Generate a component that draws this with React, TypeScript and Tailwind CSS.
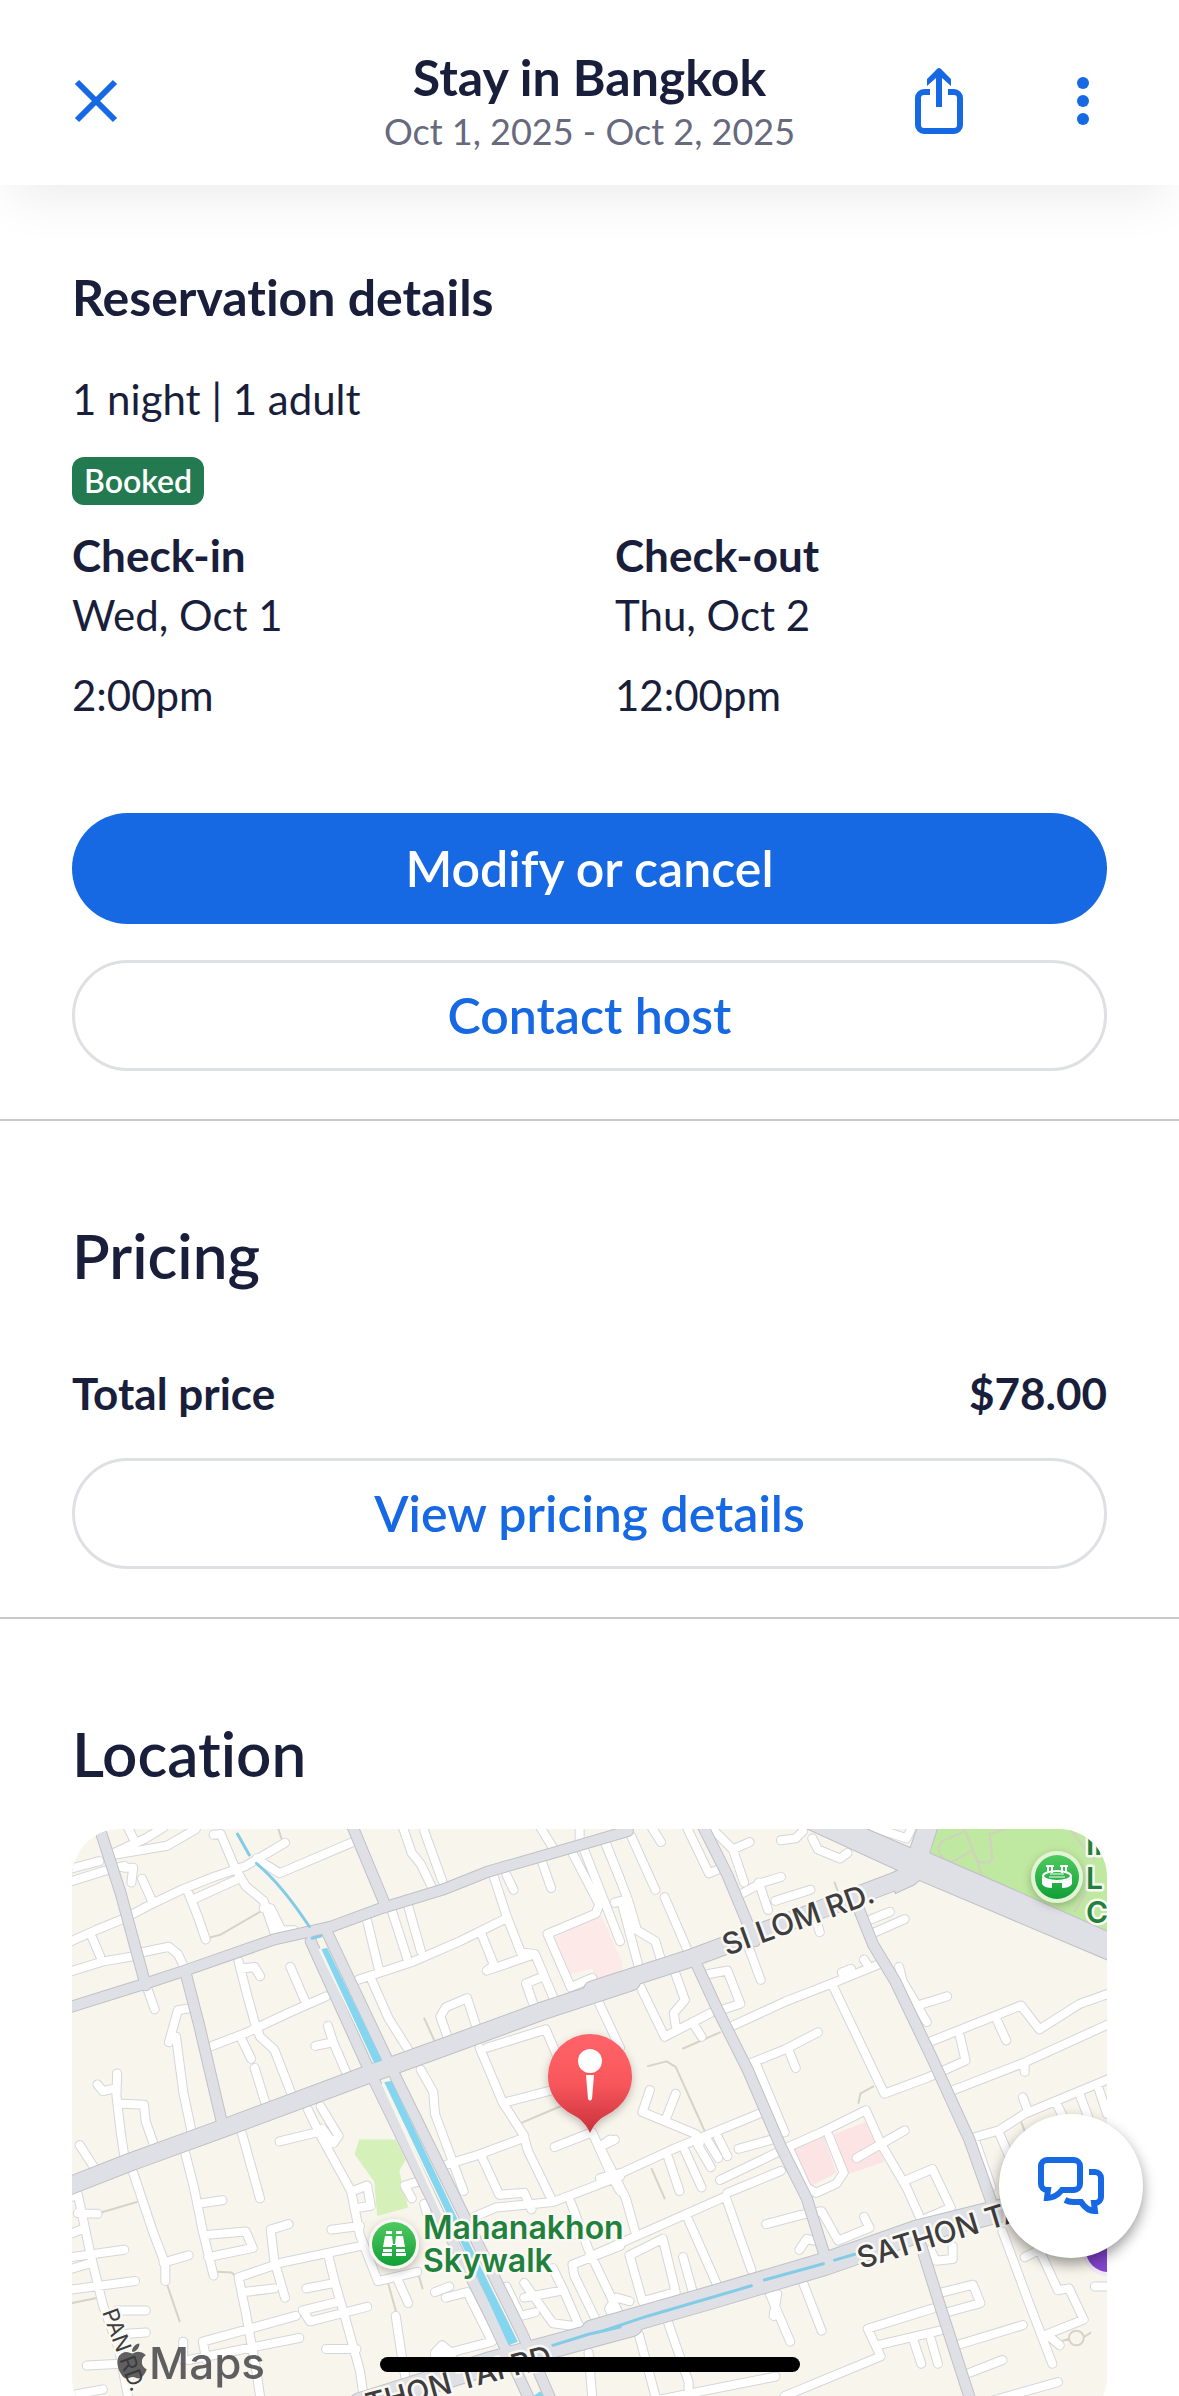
import { ReactNode } from 'react';
import { FaApple } from 'react-icons/fa';

// Street geometry, one list per map tile
type Tile = {
  transform: string;
  paths: string;
  minor: string;
  medium: string;
  major: string;
  avenue: string;
  canalThin: string;
};

const westTile: Tile = {
  transform: 'translate(-12 -9) scale(0.35714 0.36736)',
  paths:
    'M420 320L450 312L560 250M1020 540L1048 600M110 1070L215 1040M300 1265L335 1365M440 1230L480 1232L495 1245M34 1315L110 1300M920 1265L940 1335M1000 1225L1015 1275M1290 825L1400 780M610 20L620 50',
  minor:
    'M20 335L100 300L180 268L250 232L340 190L430 155L520 125L630 62M20 135L110 112M20 170L120 140L180 125M150 90L240 50L290 20M150 95L300 70L380 25M190 20L205 50M180 130L205 130L200 170M230 160L255 215' +
    'M430 40L450 38L490 130L520 180L570 220L600 305M570 240L590 240L620 300L655 300M550 105L615 145L820 60M360 200L385 260L408 325M375 215L500 160M90 320L112 370M20 415L120 385L200 372M230 360L305 345L330 365L345 395M245 460L265 515' +
    'M365 512L330 518L305 605M325 590L345 740L370 855M500 385L525 480L545 550L560 590L600 625L650 750M505 405L545 400L560 425M645 400L685 490M425 615L520 580L640 525L745 480M510 600L535 650M545 675L575 770M750 560L765 605L805 695M715 615L765 605' +
    'M160 690L158 750L170 850L180 915M105 720L120 738L158 730M165 772L235 775L240 820L265 890M55 885L95 945M205 960L260 1120L295 1210L295 1255M290 1205L360 1185M350 905L375 1000L400 1120L430 1240M385 1045L455 1035M405 1130L520 1120L540 1165L415 1190M510 855L560 1030' +
    'M695 790L730 860L815 1010L840 1130L890 1255L1000 1230M615 875L720 850M730 780L780 860L765 880L735 840M820 1010L860 995L870 1050L840 1055M760 1115L840 1105' +
    'M20 1030L50 1020L85 1180L120 1320M50 1070L105 1072M20 1130L60 1115M30 1190L180 1170M20 1225L90 1205M20 1280L210 1255M120 1320L165 1440L190 1568M160 1335L240 1335M170 1400L240 1395' +
    'M640 1100L590 1115L600 1200L630 1300M500 1245L620 1205L840 1160M500 1245L520 1340L550 1500L560 1568M515 1285L600 1275M690 1275L770 1260L750 1180M770 1260L800 1360L840 1500L850 1568M680 1335L700 1365L860 1325M680 1335L785 1310' +
    'M400 1420L530 1385L660 1350M400 1420L410 1470M360 1470L670 1410M75 1485L170 1480M345 1420L345 1470M20 1568L120 1550M945 1250L975 1315M1050 1285L1090 1270M1080 1300L1140 1285L1210 1420L1050 1460M1050 1450L1070 1430L1095 1450L1110 1500M745 1440L830 1440M940 1350L960 1480L970 1530M1000 985L965 995L985 1030M1020 1045L1030 1080' +
    'M835 435L990 385L1120 330L1245 270M860 275L895 415M930 250L975 385M975 235L1010 355M870 430L920 540L975 625M960 20L985 90L1010 120L1040 180M1020 30L1070 165M1215 155L1250 260L1290 360L1330 365L1380 480M1250 150L1270 190M1350 115L1375 185M1180 310L1215 395L1195 410L1330 365' +
    'M1085 590L1065 535L1080 510L1140 485L1165 560M1345 20L1380 75M1435 90L1510 230L1500 255L1365 310L1430 455L1490 430L1500 450M1465 75L1568 330M1525 60L1568 160M1455 20L1455 50M1325 500L1305 445L1355 425M1510 500L1568 620' +
    'M1195 620L1360 570L1400 660M1175 620L1240 770L1400 730M1240 770L1300 860M1075 940L1160 915L1300 865L1310 900L1380 1040M1160 1080L1220 1055L1380 1040L1568 970M1180 915L1230 1020L1300 1015L1320 1060M1010 680L1045 740L1050 800L1130 1010' +
    'M1385 890L1490 850L1550 980L1568 1010M1540 870L1510 890M1430 1040L1480 1170L1568 1350M1440 1240L1435 1210L1568 1160M1440 1240L1500 1360M1250 1270L1290 1350L1330 1340M1300 1260L1380 1370L1460 1380M1300 1300L1410 1280L1450 1370M1380 1220L1410 1280M1480 1450L1490 1568',
  medium:
    'M110 20L170 200L240 450M20 512L240 445L350 410L600 325L760 290L900 240L1070 190L1200 140L1380 90L1590 30M350 410L390 560L455 830M820 20L910 230M702 330L870 690L1065 1080L1200 1340L1310 1568M745 300L930 680L1125 1065L1295 1400L1370 1568',
  major: 'M0 1006L200 930L455 840L870 690L1070 620L1350 520L1600 440',
  avenue: 'M840 1590L1200 1480L1600 1375',
  canalThin: 'M497 38L530 95M550 118Q620 175 698 290M706 322L730 316M1380 1430L1480 1400L1568 1380',
};

const eastTile: Tile = {
  transform: 'translate(528 -9) scale(0.36927 0.36736)',
  paths:
    'M130 670L180 657L205 672L285 850M140 950L175 1030M225 622L325 578M700 770L705 745L740 725M635 170L650 210M1240 1422L1270 1412M1310 1408L1328 1396M1270 1410a20 20 0 1 0 40 0a20 20 0 1 0 -40 0M1140 820L1155 860',
  minor:
    'M15 60L75 215L100 300M40 225L75 215M85 45L150 190M60 230L105 400M100 300L150 330L165 380M140 20L165 60M175 210L235 350M235 20L295 145L320 135M300 20L360 80L405 60M360 80L390 170M385 200L440 170L490 155M430 170L455 245M475 220L570 190M490 55L530 50L550 30M575 50L590 80L650 105L670 90' +
    'M400 340L435 435M585 270L595 305M735 270L785 250M745 305L825 270M290 420L345 410L380 500L335 515M360 560L500 495L640 440L750 395M655 415L680 405M715 380L725 395M630 450L770 745L890 700L990 655L975 590M400 665L500 625L590 578M510 625L530 675M425 670L500 850' +
    'M205 420L230 490L200 525L205 560M110 455L175 590L300 525M250 550L275 590M810 400L820 440L885 550M860 505L940 480M890 605L1140 505L1190 570L1300 500L1390 468M1075 545L1100 600M945 740L1150 660L1390 550M1150 660L1150 685' +
    'M1010 865L1080 845L1150 800L1390 700M1145 755L1160 795M1235 770L1260 820M1300 750L1330 830M1350 730L1373 800M1015 870L1060 1000M1080 850L1110 920' +
    'M0 975L60 960L200 895L430 800M135 735L115 795L260 855L270 880M205 745L180 810M185 920L215 1010M230 900L275 1000M265 885L300 945M290 870L320 920M320 865L345 915M375 895L465 870M325 980L480 905M345 1015L490 955M0 890L40 870M0 890L70 1030L95 1120' +
    'M-30 1190L340 1025L410 1225M240 1090L315 1260M80 1185L170 1140L205 1285L115 1310L80 1185M225 1190L250 1280M35 1350L25 1330L45 1300L80 1310M450 1100L545 1075L600 1065L645 1145L730 1110L715 1080M540 1170L560 1140L580 1145' +
    'M510 890L600 850L720 790L760 880L830 1000L870 1090L950 1055L900 950L830 980M620 860L660 960L640 990L585 1015L560 1000L510 890M695 920L825 845' +
    'M460 1290L515 1420M470 1350L480 1290M550 1260L600 1390M105 1400L150 1568M185 1370L240 1530L240 1568M100 1590L475 1515M500 1568L760 1460L725 1385L900 1330M750 1430L920 1390M850 1420L870 1480M895 1410L915 1480M965 1430L1145 1375M1000 1505L1090 1470M1030 1590L1240 1530M910 1290L1010 1265L1030 1315L940 1340M895 1170L910 1200L955 1195L955 1160' +
    'M1090 1120L1160 1310L1225 1480M1210 1400L1310 1360L1270 1275L1240 1280L1190 1170L1150 1190M1340 1270L1390 1270M1210 1400L1245 1430M740 20L830 50L850 10',
  medium:
    'M275 10L345 150L420 330M260 390L320 520L400 680L490 890L560 1030L610 1190M690 215L740 340L800 440L900 650L1000 870L1060 1040M870 1160L920 1320L1010 1600',
  major: 'M-20 462L250 375L450 300L830 155',
  avenue: 'M-20 1392L300 1300L610 1208L860 1120L1100 1060',
  canalThin: 'M10 1390L130 1350L410 1268M445 1252L605 1208M635 1198L690 1182',
};

const tiles = [westTile, eastTile];

type LayerProps = {
  layer: 'paths' | 'minor' | 'medium' | 'major' | 'avenue' | 'canalThin';
  color: string;
  width: number;
};

const Layer = ({ layer, color, width }: LayerProps) => (
  <g fill="none" stroke={color} strokeWidth={width} strokeLinecap="round" strokeLinejoin="round">
    {tiles.map((tile) => (
      <g key={tile.transform} transform={tile.transform}>
        <path d={tile[layer]} vectorEffect="non-scaling-stroke" />
      </g>
    ))}
  </g>
);

const LocationMap = () => (
  <svg
    viewBox="0 0 1035 596"
    preserveAspectRatio="xMidYMin slice"
    className="block h-[596px] w-full rounded-[48px] bg-[#f8f5ec] font-['Inter',sans-serif]"
    role="img"
    aria-label="Map of the area around the property"
  >
    <defs>
      <linearGradient id="pin" x1="0" y1="0" x2="0" y2="1">
        <stop offset="0" stopColor="#ff6469" />
        <stop offset="0.5" stopColor="#f8575c" />
        <stop offset="1" stopColor="#c9303a" />
      </linearGradient>
      <linearGradient id="poi" x1="0" y1="0" x2="0" y2="1">
        <stop offset="0" stopColor="#4fca5f" />
        <stop offset="1" stopColor="#119f38" />
      </linearGradient>
      <filter id="soft" x="-50%" y="-50%" width="200%" height="200%">
        <feDropShadow dx="0" dy="3" stdDeviation="4" floodColor="#000" floodOpacity="0.25" />
      </filter>
    </defs>

    {/* Parks and hospitals */}
    <g transform={westTile.transform}>
      <path d="M838 870H940L968 925L950 955L960 1000L975 1055L888 1078L880 985L825 910Z" fill="#d6f0ba" />
      <path d="M1385 320L1510 262L1575 400L1568 430L1510 440L1490 405L1425 420Z" fill="#fce9e8" />
    </g>
    <g transform={eastTile.transform}>
      <path d="M915 10H1390V310L893 100Z" fill="#bfe8a0" />
      <path d="M0 255L62 390L0 435Z" fill="#fce9e8" />
      <path d="M515 885L605 860L640 960L565 1000ZM635 855L725 820L770 930L670 965Z" fill="#fce4e4" />
      <path
        d="M985 32L925 58Q910 80 925 100Q945 120 965 108L1010 82M985 20L1022 112L1035 155M1022 112Q1060 125 1062 100L1055 40L1130 10M1260 10L1340 110M1320 190L1285 250"
        fill="none"
        stroke="#cfd3bd"
        strokeWidth="6"
      />
    </g>

    <Layer layer="paths" color="#d6d3c9" width={2} />
    <Layer layer="minor" color="#d6d6da" width={10} />
    <Layer layer="minor" color="#ffffff" width={8} />
    <Layer layer="medium" color="#c0c1c6" width={12} />
    <Layer layer="major" color="#c0c1c6" width={19} />
    <Layer layer="avenue" color="#c0c1c6" width={24} />
    <g transform={eastTile.transform}>
      <path
        d="M530 10L690 10L840 75L862 10H918L893 90L1100 180L1390 310V388L1100 265L865 165L850 177L800 200L780 150L805 137Z"
        fill="#dfe0e5"
        stroke="#c0c1c6"
        strokeWidth="3"
      />
    </g>
    <Layer layer="medium" color="#dfe0e5" width={10} />
    <Layer layer="major" color="#dfe0e5" width={17} />
    <Layer layer="avenue" color="#dfe0e5" width={22} />
    <g transform={westTile.transform}>
      <path d="M727 350L883 662M903 716L1070 1070" stroke="#f8f5ec" strokeWidth="8" />
      <path d="M732 352L748 348L902 655L880 663Z" fill="#84d6f0" />
      <path d="M908 714L928 710L1100 1060L1190 1240L1282 1420L1256 1430L1165 1235L1080 1065Z" fill="#84d6f0" />
      <path d="M1325 1568L1345 1555L1375 1600H1335Z" fill="#84d6f0" />
    </g>
    <Layer layer="canalThin" color="#84cbe6" width={3} />

    {/* Street names */}
    <g
      fill="#3d3d40"
      stroke="#faf8f2"
      strokeWidth="5"
      strokeLinejoin="round"
      paintOrder="stroke"
      fontSize="30"
      fontWeight="500"
    >
      <text transform="translate(655 127) rotate(-20)">SI LOM RD.</text>
      <text transform="translate(789 440) rotate(-17)">SATHON TAI RD.</text>
      <text transform="translate(297 586) rotate(-15)">THON TAI RD.</text>
      <text transform="translate(30 483) rotate(70)" fontSize="22" fontWeight="400">
        PAN RD.
      </text>
    </g>

    {/* Points of interest */}
    <g
      fill="#21803c"
      stroke="#faf8f2"
      strokeWidth="5"
      strokeLinejoin="round"
      paintOrder="stroke"
      fontSize="32"
      fontWeight="600"
    >
      <text x="351" y="410">
        Mahanakhon
      </text>
      <text x="351" y="443">
        Skywalk
      </text>
      <text x="1014" y="26" fontSize="30">
        In
      </text>
      <text x="1014" y="60" fontSize="30">
        L
      </text>
      <text x="1014" y="94" fontSize="30">
        C
      </text>
    </g>
    <g transform="translate(322 415)">
      <circle r="25" fill="#f8f7f2" filter="url(#soft)" />
      <circle r="22" fill="url(#poi)" />
      <path
        d="M-8 -13h6v3h-6zM2 -13h6v3h-6zM-9 -8h7l1 8h2l1 -8h7l2 11h-9v-2h-4v2h-9zM-11 5h9v3h-9zM2 5h9v3h-9zM-12 9h10v3h-10zM2 9h10v3h-10z"
        fill="#fff"
      />
    </g>
    <circle cx="985" cy="48" r="26" fill="#e3f4d6" filter="url(#soft)" />
    <circle cx="985" cy="48" r="22" fill="url(#poi)" />
    <g fill="none" stroke="#fff" strokeWidth="2">
      <path d="M974 37h8M988 37h8M976 38v6M980 38v6M990 38v6M994 38v6" />
      <ellipse cx="985" cy="47" rx="14" ry="5" />
      <path d="M978 45h14M977 48h16" strokeWidth="1" />
    </g>
    <path d="M970 48c3 6 27 6 30 0v7c-2 3-6 4-10 4v-5h-10v5c-4 0-8-1-10-4z" fill="#fff" />
    <circle cx="1036" cy="421" r="26" fill="#f0e8f4" />
    <circle cx="1036" cy="421" r="22" fill="#8445cf" />

    {/* Property pin */}
    <path
      d="M518 205a42 42 0 0 1 42 42c0 20-13 33-27 40c-7 4-12 10-15 17c-3-7-8-13-15-17c-14-7-27-20-27-40a42 42 0 0 1 42-42z"
      fill="url(#pin)"
      filter="url(#soft)"
    />
    <circle cx="518" cy="232" r="12" fill="#fff" />
    <path d="M514 246h8l-2 24q-2 3-4 0z" fill="#fff" />

    {/* Attribution */}
    <g fill="#3a3a3d" opacity="0.8">
      <FaApple x={40} y={512} size={40} color="#3a3a3d" />
      <text x="77" y="550" fontSize="44" fontWeight="500">
        Maps
      </text>
    </g>
  </svg>
);

const CloseIcon = () => (
  <svg width="48" height="48" viewBox="0 0 48 48" fill="none" stroke="currentColor" strokeWidth="6" aria-hidden="true">
    <path d="M5 5L43 43M43 5L5 43" />
  </svg>
);

const ShareIcon = () => (
  <svg width="48" height="66" viewBox="0 0 48 66" aria-hidden="true">
    <path
      d="M15 24H9a6 6 0 0 0-6 6v27a6 6 0 0 0 6 6h30a6 6 0 0 0 6-6V30a6 6 0 0 0-6-6h-6"
      fill="none"
      stroke="currentColor"
      strokeWidth="6"
    />
    <path d="M22 1Q24-1 26 1L36 11V18L27 10V39H21V10L12 18V11Z" fill="currentColor" />
  </svg>
);

const MoreIcon = () => (
  <svg width="12" height="48" viewBox="0 0 12 48" fill="currentColor" aria-hidden="true">
    <circle cx="6" cy="6" r="6" />
    <circle cx="6" cy="24" r="6" />
    <circle cx="6" cy="42" r="6" />
  </svg>
);

const ChatIcon = () => (
  <svg width="66" height="58" viewBox="0 0 66 58" fill="none" stroke="currentColor" strokeWidth="6" aria-hidden="true">
    <path d="M9 3H36a6 6 0 0 1 6 6v18a6 6 0 0 1-6 6H24c-4 5-9 8-15 8l1-8H9a6 6 0 0 1-6-6V9a6 6 0 0 1 6-6z" />
    <path d="M51 15h6a6 6 0 0 1 6 6v19a6 6 0 0 1-6 6h-1l1 8c-6 0-10-3-14-9h-8c-4 0-6-1-8-2" />
  </svg>
);

const OutlineButton = ({ children }: { children: ReactNode }) => (
  <button
    type="button"
    className="h-[111px] w-full rounded-full border-3 border-[#dfe0e4] text-[50px] font-semibold text-[#1668e3]"
  >
    {children}
  </button>
);

type StayTimeProps = {
  label: string;
  date: string;
  time: string;
};

const StayTime = ({ label, date, time }: StayTimeProps) => (
  <div className="text-[42px] leading-[60px]">
    <h3 className="text-[44px] font-bold">{label}</h3>
    <p>{date}</p>
    <p className="mt-5">{time}</p>
  </div>
);

const App = () => {
  return (
    <div className="relative flex h-screen flex-col overflow-hidden bg-white font-['Lato',sans-serif] text-[#191e3b] [font-variant-ligatures:none]">
      <header className="relative z-10 grid h-[185px] shrink-0 grid-cols-[1fr_auto_1fr] items-center bg-white px-[72px] pt-4 shadow-[0_24px_48px_-12px_rgba(0,0,0,0.08)]">
        <button type="button" aria-label="Close" className="justify-self-start text-[#1668e3]">
          <CloseIcon />
        </button>
        <div className="text-center">
          <h1 className="text-[50px] leading-[60px] font-bold">Stay in Bangkok</h1>
          <p className="text-[36px] leading-[48px] text-[#676a7d]">Oct 1, 2025 - Oct 2, 2025</p>
        </div>
        <div className="flex items-center justify-end gap-[114px] pr-[18px] text-[#1668e3]">
          <button type="button" aria-label="Share">
            <ShareIcon />
          </button>
          <button type="button" aria-label="More options">
            <MoreIcon />
          </button>
        </div>
      </header>

      <main className="flex-1 overflow-y-auto [scrollbar-width:none]">
        <section className="border-b-2 border-[#c9cacd] px-[72px] pt-[82px] pb-12">
          <h2 className="text-[50px] leading-[60px] font-bold">Reservation details</h2>
          <p className="mt-[42px] text-[42px] leading-[60px]">1 night | 1 adult</p>
          <span className="mt-7 block h-12 w-fit rounded-xl bg-[#247a50] px-3 text-[32px] leading-[48px] font-semibold text-white">
            Booked
          </span>
          <div className="mt-5 grid grid-cols-2 gap-[51px]">
            <StayTime label="Check-in" date="Wed, Oct 1" time="2:00pm" />
            <StayTime label="Check-out" date="Thu, Oct 2" time="12:00pm" />
          </div>
          <div className="mt-[88px] flex flex-col gap-9">
            <button
              type="button"
              className="h-[111px] w-full rounded-full bg-[#1668e3] text-[50px] font-semibold text-white"
            >
              Modify or cancel
            </button>
            <OutlineButton>Contact host</OutlineButton>
          </div>
        </section>

        <section className="border-b-2 border-[#c9cacd] px-[72px] pt-[98px] pb-12">
          <h2 className="text-[62px] leading-[72px] font-semibold">Pricing</h2>
          <div className="mt-[72px] mb-[35px] flex justify-between text-[44px] leading-[60px] font-bold">
            <span>Total price</span>
            <span>$78.00</span>
          </div>
          <OutlineButton>View pricing details</OutlineButton>
        </section>

        <section className="px-[72px] pt-[98px]">
          <h2 className="mb-10 text-[62px] leading-[72px] font-semibold">Location</h2>
          <LocationMap />
        </section>
      </main>

      <button
        type="button"
        aria-label="Open chat"
        className="absolute right-9 bottom-[138px] flex size-36 items-center justify-center rounded-full bg-white text-[#1668e3] shadow-[0_6px_14px_rgba(0,0,0,0.4)]"
      >
        <ChatIcon />
      </button>
      <div className="absolute bottom-6 left-1/2 h-[15px] w-[420px] -translate-x-1/2 rounded-full bg-black" />
    </div>
  );
};

export default App;
